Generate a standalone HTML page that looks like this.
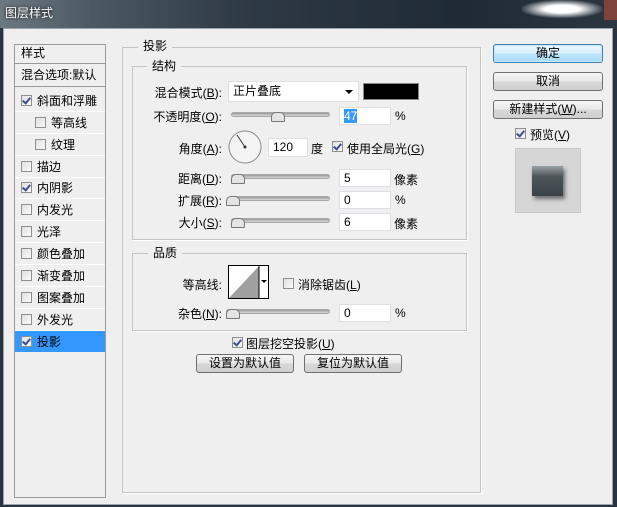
<!DOCTYPE html>
<html><head><meta charset="utf-8"><style>
*{box-sizing:border-box;margin:0;padding:0}
body{width:617px;height:507px;overflow:hidden;background:#2a3440;font-family:"Liberation Sans","Noto Sans CJK SC",sans-serif;font-size:12px;color:#000;position:relative}
.a{position:absolute;white-space:nowrap}
#title{left:0;top:0;width:617px;height:28px;background:linear-gradient(90deg,#6d7880 0%,#4c5864 15%,#2e3945 40%,#1f2a35 75%,#2b3640 100%)}
#body{left:3px;top:28px;width:610px;height:477px;background:#efefef;border:1px solid #9aa4ad}
.grp{position:absolute;border:1px solid #c4c4c4;box-shadow:1px 1px 0 #fff}
.lg{position:absolute;background:#efefef;padding:0 5px;line-height:14px}
.cb{position:absolute;width:11px;height:11px;border:1px solid #8f8f8f;background:linear-gradient(135deg,#e0e0e0,#fafafa)}
.cb.on::after{content:"";position:absolute;left:2px;top:0px;width:3px;height:6px;border:solid #3d4f8a;border-width:0 2px 2px 0;transform:rotate(40deg)}
.row{position:absolute;left:1px;width:90px;height:22px;border-bottom:1px solid #fff;line-height:22px;padding-left:22px}
.row .cb{left:6px;top:5px}
.inp{position:absolute;background:#fff;border:1px solid #dcdfe3;height:18px;line-height:16px;padding-left:4px}
.sl{position:absolute;height:5px;border-radius:3px;background:linear-gradient(#9a9a9a,#d8d8d8);border:1px solid #a8a8a8}
.th{position:absolute;width:0;height:0}
.th::before{content:"";position:absolute;left:-6px;top:0;width:12px;height:8px;background:#e4e4e4;border:1px solid #777;border-radius:5px 5px 1px 1px}
.btn{position:absolute;height:19px;border:1px solid #707070;border-radius:3px;background:linear-gradient(#f6f6f6 0%,#e8e8e8 50%,#d8d8d8 51%,#cfcfcf 100%);text-align:center;line-height:17px}
.lbl{position:absolute;text-align:right;width:100px}
</style></head><body>
<div id="title" class="a"></div>
<div class="a" style="left:5px;top:4px;color:#fff;font-size:12px;text-shadow:0 0 3px #000">图层样式</div>
<div class="a" style="left:522px;top:0;width:80px;height:18px;background:radial-gradient(ellipse at center,#fff 30%,rgba(255,255,255,0) 75%)"></div>
<div class="a" style="left:604px;top:0;width:13px;height:20px;background:#a44a3a;opacity:.7"></div>
<div id="body" class="a"></div>

<!-- left list -->
<div class="a" style="left:14px;top:44px;width:92px;height:454px;border:1px solid #9a9a9a;background:#efefef"></div>
<div class="a" style="left:15px;top:44px;width:90px;height:20px;border-bottom:1px solid #9a9a9a;line-height:18px;padding-left:6px">样式</div>
<div class="a" style="left:15px;top:65px;width:90px;height:22px;border-bottom:1px solid #9a9a9a;line-height:21px;padding-left:6px;overflow:hidden">混合选项:默认</div>
<div class="a" style="left:14px;top:88px;width:92px">
<div class="row" style="top:2px"><span class="cb on"></span>斜面和浮雕</div>
<div class="row" style="top:24px;padding-left:36px"><span class="cb" style="left:20px"></span>等高线</div>
<div class="row" style="top:46px;padding-left:36px"><span class="cb" style="left:20px"></span>纹理</div>
<div class="row" style="top:68px"><span class="cb"></span>描边</div>
<div class="row" style="top:89px"><span class="cb on"></span>内阴影</div>
<div class="row" style="top:111px"><span class="cb"></span>内发光</div>
<div class="row" style="top:133px"><span class="cb"></span>光泽</div>
<div class="row" style="top:155px"><span class="cb"></span>颜色叠加</div>
<div class="row" style="top:177px"><span class="cb"></span>渐变叠加</div>
<div class="row" style="top:199px"><span class="cb"></span>图案叠加</div>
<div class="row" style="top:221px"><span class="cb"></span>外发光</div>
<div class="row" style="top:243px;background:#3399ff;height:21px;border:0"><span class="cb on"></span>投影</div>
</div>

<!-- main group -->
<div class="grp" style="left:122px;top:47px;width:359px;height:446px"></div>
<div class="lg" style="left:138px;top:39px">投影</div>
<div class="grp" style="left:132px;top:66px;width:335px;height:174px"></div>
<div class="lg" style="left:147px;top:59px">结构</div>

<div class="lbl" style="left:122px;top:84px">混合模式(<u>B</u>):</div>
<div class="inp" style="left:228px;top:81px;width:131px;height:21px;line-height:19px">正片叠底<span style="position:absolute;right:5px;top:8px;border:4px solid transparent;border-top:4px solid #000;border-bottom:0"></span></div>
<div class="a" style="left:363px;top:83px;width:56px;height:17px;background:#000;border:1px solid #888"></div>

<div class="lbl" style="left:122px;top:108px">不透明度(<u>O</u>):</div>
<div class="sl" style="left:231px;top:112px;width:99px"></div><div class="th" style="left:277px;top:112px"></div>
<div class="inp" style="left:339px;top:107px;width:52px"><span style="background:#3399ff;color:#fff">47</span></div>
<div class="a" style="left:395px;top:109px">%</div>

<div class="lbl" style="left:122px;top:140px">角度(<u>A</u>):</div>
<svg class="a" style="left:228px;top:130px" width="34" height="34"><circle cx="17" cy="17" r="16" fill="#f4f4f4" stroke="#888"/><line x1="17" y1="17" x2="9" y2="5" stroke="#333" stroke-width="1"/><circle cx="17" cy="17" r="1.5" fill="#333"/></svg>
<div class="inp" style="left:268px;top:138px;width:40px;height:19px">120</div>
<div class="a" style="left:311px;top:140px">度</div>
<span class="cb on" style="left:332px;top:141px"></span>
<div class="a" style="left:347px;top:140px">使用全局光(<u>G</u>)</div>

<div class="lbl" style="left:122px;top:170px">距离(<u>D</u>):</div>
<div class="sl" style="left:231px;top:174px;width:99px"></div><div class="th" style="left:237px;top:174px"></div>
<div class="inp" style="left:339px;top:169px;width:52px">5</div>
<div class="a" style="left:394px;top:171px">像素</div>

<div class="lbl" style="left:122px;top:192px">扩展(<u>R</u>):</div>
<div class="sl" style="left:231px;top:196px;width:99px"></div><div class="th" style="left:232px;top:196px"></div>
<div class="inp" style="left:339px;top:191px;width:52px">0</div>
<div class="a" style="left:395px;top:193px">%</div>

<div class="lbl" style="left:122px;top:214px">大小(<u>S</u>):</div>
<div class="sl" style="left:231px;top:218px;width:99px"></div><div class="th" style="left:237px;top:218px"></div>
<div class="inp" style="left:339px;top:213px;width:52px">6</div>
<div class="a" style="left:394px;top:215px">像素</div>

<div class="grp" style="left:132px;top:253px;width:335px;height:78px"></div>
<div class="lg" style="left:148px;top:246px">品质</div>
<div class="lbl" style="left:122px;top:276px">等高线:</div>
<svg class="a" style="left:228px;top:265px" width="41" height="34"><rect x="0.5" y="0.5" width="40" height="33" fill="#fff" stroke="#000"/><polygon points="1,33 31,1 31,33" fill="#a0a0a0"/><line x1="31" y1="0" x2="31" y2="34" stroke="#000"/><polygon points="33,15 39,15 36,18" fill="#000"/></svg>
<span class="cb" style="left:283px;top:278px"></span>
<div class="a" style="left:298px;top:276px">消除锯齿(<u>L</u>)</div>
<div class="lbl" style="left:122px;top:305px">杂色(<u>N</u>):</div>
<div class="sl" style="left:226px;top:309px;width:104px"></div><div class="th" style="left:232px;top:309px"></div>
<div class="inp" style="left:339px;top:304px;width:52px">0</div>
<div class="a" style="left:395px;top:306px">%</div>

<span class="cb on" style="left:232px;top:337px"></span>
<div class="a" style="left:246px;top:335px">图层挖空投影(<u>U</u>)</div>
<div class="btn" style="left:196px;top:354px;width:98px">设置为默认值</div>
<div class="btn" style="left:304px;top:354px;width:98px">复位为默认值</div>

<!-- right -->
<div class="btn" style="left:493px;top:44px;width:110px;border-color:#3c7fb1;background:linear-gradient(#eaf6fd,#d9f0fc 50%,#bee6fd 51%,#a7d9f5);box-shadow:inset 0 0 0 1px #cbe8f8">确定</div>
<div class="btn" style="left:493px;top:72px;width:110px">取消</div>
<div class="btn" style="left:493px;top:100px;width:110px">新建样式(<u>W</u>)...</div>
<span class="cb on" style="left:515px;top:128px"></span>
<div class="a" style="left:530px;top:126px">预览(<u>V</u>)</div>
<div class="a" style="left:515px;top:148px;width:66px;height:65px;background:#d6d6d6;border:1px solid #c8c8c8"></div>
<div class="a" style="left:532px;top:166px;width:31px;height:30px;background:linear-gradient(#9aa0a3 0%,#4d5559 35%,#3a4448 100%);box-shadow:2px 3px 4px rgba(0,0,0,.5)"></div>
</body></html>
